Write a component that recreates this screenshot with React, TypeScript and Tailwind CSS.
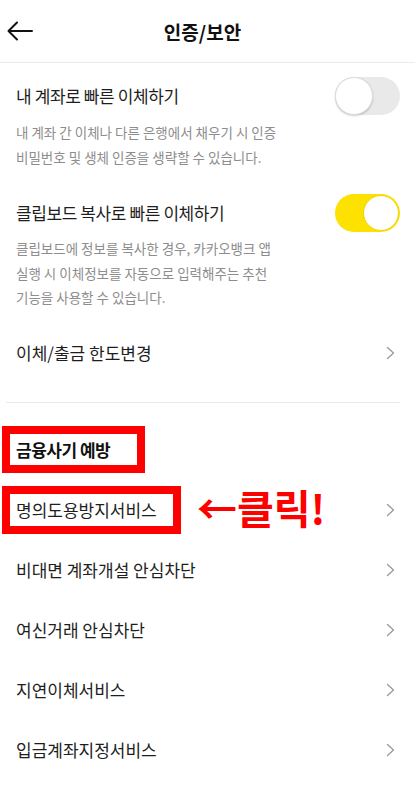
import React from "react";

const Chevron = () => (
  <svg width="9" height="14" viewBox="0 0 9 14" fill="none">
    <path d="M1.5 1.5 L7.5 7 L1.5 12.5" stroke="#9a9a9a" strokeWidth="1.3" strokeLinecap="round" strokeLinejoin="round" />
  </svg>
);

const Toggle = ({ on }: { on: boolean }) =>
  on ? (
    <div className="w-[65px] h-[38px] rounded-full bg-[#fde100] flex items-center justify-end pr-[1px]">
      <div className="w-[36px] h-[36px] rounded-full bg-white border-[1.5px] border-[#f2d200]" />
    </div>
  ) : (
    <div className="w-[65px] h-[38px] rounded-full bg-[#e9e9e9] flex items-center justify-start">
      <div className="w-[38px] h-[38px] rounded-full bg-white border border-[#dddddd] shadow-[0_1px_2px_rgba(0,0,0,0.2)]" />
    </div>
  );

const MenuRow = ({ label }: { label: string }) => (
  <div className="h-[60px] flex items-center pl-[16px] pr-[20px]">
    <span className="text-[17px] text-[#1e1e1e]">{label}</span>
    <span className="ml-auto flex items-center">
      <Chevron />
    </span>
  </div>
);

export default function App() {
  return (
    <div
      className="w-[415px] h-[786px] bg-white overflow-hidden"
      style={{ fontFamily: '"Noto Sans CJK KR", "Noto Sans", sans-serif' }}
    >
      {/* Header */}
      <div className="h-[63px] grid grid-cols-[46px_1fr_56px] items-center border-b border-[#ebebeb]">
        <div className="pl-[7px] flex items-center">
          <svg width="26" height="20" viewBox="0 0 26 20" fill="none">
            <path d="M25 10 H2 M10 1.5 L1.5 10 L10 18.5" stroke="#111" strokeWidth="2" strokeLinecap="round" strokeLinejoin="round" />
          </svg>
        </div>
        <div className="text-center text-[19px] font-bold text-[#111] leading-none">인증/보안</div>
        <div />
      </div>

      {/* Row 1 */}
      <div className="pt-[14px] pl-[16px] pr-[15px]">
        <div className="h-[38px] flex items-center">
          <span className="text-[17px] tracking-[-0.4px] text-[#1e1e1e]">내 계좌로 빠른 이체하기</span>
          <span className="ml-auto">
            <Toggle on={false} />
          </span>
        </div>
        <div className="mt-[5px] text-[13.5px] leading-[25px] text-[#8d8d8d]">
          내 계좌 간 이체나 다른 은행에서 채우기 시 인증
          <br />
          비밀번호 및 생체 인증을 생략할 수 있습니다.
        </div>
      </div>

      {/* Row 2 */}
      <div className="mt-[24px] pl-[16px] pr-[15px]">
        <div className="h-[38px] flex items-center">
          <span className="text-[17px] tracking-[-0.4px] text-[#1e1e1e]">클립보드 복사로 빠른 이체하기</span>
          <span className="ml-auto">
            <Toggle on={true} />
          </span>
        </div>
        <div className="mt-[4px] text-[13.5px] leading-[24.5px] text-[#8d8d8d]">
          클립보드에 정보를 복사한 경우, 카카오뱅크 앱
          <br />
          실행 시 이체정보를 자동으로 입력해주는 추천
          <br />
          기능을 사용할 수 있습니다.
        </div>
      </div>

      {/* Limit row */}
      <div className="mt-[13.5px]">
        <MenuRow label="이체/출금 한도변경" />
      </div>

      <div className="mt-[19px] ml-[6px] w-[394px] h-px bg-[#ebebeb]" />

      {/* Section heading */}
      <div className="mt-[23px] ml-[2px] w-[143px] h-[47px] border-[8px] border-[#ff0000] flex items-center pl-[6px]">
        <span className="text-[17px] font-bold tracking-[-0.5px] text-[#111]">금융사기 예방</span>
      </div>

      {/* Highlighted row */}
      <div className="mt-[7px] h-[60px] flex items-center pr-[20px]">
        <div className="ml-[2px] w-[179px] h-[48px] border-[8px] border-[#ff0000] flex items-center pl-[6px]">
          <span className="text-[17px] text-[#1e1e1e]">명의도용방지서비스</span>
        </div>
        <span className="ml-[16px] -mt-[6px] text-[40px] font-bold text-[#ff0000] leading-none">←클릭!</span>
        <span className="ml-auto flex items-center">
          <Chevron />
        </span>
      </div>

      <MenuRow label="비대면 계좌개설 안심차단" />
      <MenuRow label="여신거래 안심차단" />
      <MenuRow label="지연이체서비스" />
      <MenuRow label="입금계좌지정서비스" />
    </div>
  );
}
